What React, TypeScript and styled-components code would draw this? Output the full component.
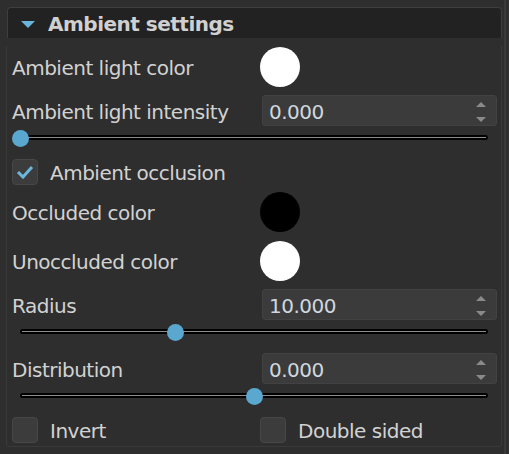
import React from 'react'
import styled, { createGlobalStyle } from 'styled-components'

const GlobalStyle = createGlobalStyle`
  html, body {
    margin: 0;
    padding: 0;
    background: #2e2e2e;
  }
  * {
    box-sizing: border-box;
  }
`

const Page = styled.div`
  width: 509px;
  height: 454px;
  display: flex;
  background: #2e2e2e;
  font-family: 'DejaVu Sans', 'Noto Sans', sans-serif;
  font-size: 20px;
  letter-spacing: -0.5px;
  color: #d2d2d2;
  overflow: hidden;
`

const Main = styled.div`
  flex: 1;
  padding: 7px 2px 0 6px;
`

const Rail = styled.div`
  width: 2px;
  margin-right: 3px;
  background: #3a3a3a;
`

const Header = styled.div`
  height: 31px;
  margin-left: 1px;
  display: flex;
  align-items: center;
  gap: 13px;
  padding: 2px 0 0 13px;
  background: #222222;
  border: 1px solid #3e3e3e;
  border-bottom: none;
  border-radius: 4px 4px 0 0;
`

const Caret = styled.svg`
  width: 14px;
  height: 7px;
  flex: none;
`

const Title = styled.span`
  font-weight: bold;
  color: #d0d0d0;
`

const Body = styled.div`
  margin-top: 8px;
  height: 401px;
  padding: 0 4px 0 5px;
  border: 1px solid #393939;
  border-top: none;
  border-radius: 0 0 3px 3px;
  display: flex;
  flex-direction: column;
`

const Row = styled.div<{ $mt: number; $h: number }>`
  margin-top: ${p => p.$mt}px;
  height: ${p => p.$h}px;
  display: grid;
  grid-template-columns: 248px 1fr;
  align-items: center;
`

const Label = styled.span`
  white-space: nowrap;
  padding-top: 2px;
`

const Swatch = styled.div<{ $color: string }>`
  width: 40px;
  height: 40px;
  border-radius: 50%;
  background: ${p => p.$color};
`

const Spin = styled.div`
  height: 31px;
  margin-left: 2px;
  display: flex;
  align-items: center;
  justify-content: space-between;
  padding: 2px 10px 0 6px;
  background: #3b3b3b;
  border: 1px solid #424242;
  border-radius: 3px;
  color: #d0d7df;
`

const Arrows = styled.div`
  display: flex;
  flex-direction: column;
  gap: 10px;
`

const Arrow = styled.svg`
  width: 10px;
  height: 5px;
  display: block;
`

const SliderBox = styled.div<{ $h: number }>`
  height: ${p => p.$h}px;
  padding: 0 9px 0 8px;
  display: flex;
  align-items: center;
`

const Track = styled.div`
  position: relative;
  flex: 1;
  height: 5px;
  background: #000;
  border-radius: 3px;

  &::after {
    content: '';
    position: absolute;
    left: 2px;
    right: 2px;
    top: 2px;
    height: 1px;
    background: #8c8c8c;
  }
`

const Thumb = styled.div`
  position: absolute;
  top: 50%;
  width: 17px;
  height: 17px;
  margin: -7px 0 0 -8.5px;
  border-radius: 50%;
  background: #5aa7cf;
  z-index: 1;
`

const CheckRow = styled.div<{ $mt: number }>`
  margin-top: ${p => p.$mt}px;
  height: 26px;
  display: grid;
  grid-template-columns: 248px 1fr;
  align-items: center;
`

const CheckItem = styled.label`
  display: flex;
  align-items: center;
  gap: 12px;
  white-space: nowrap;
`

const Box = styled.span`
  width: 26px;
  height: 26px;
  flex: none;
  display: flex;
  align-items: center;
  justify-content: center;
  background: #3c3c3c;
  border: 1px solid #474747;
  border-radius: 4px;
`

function Spinner({ value }: { value: string }) {
  return (
    <Spin>
      <span>{value}</span>
      <Arrows>
        <Arrow viewBox="0 0 10 5">
          <polygon points="0,5 10,5 5,0" fill="#8a8a8a" />
        </Arrow>
        <Arrow viewBox="0 0 10 5">
          <polygon points="0,0 10,0 5,5" fill="#8a8a8a" />
        </Arrow>
      </Arrows>
    </Spin>
  )
}

function Slider({ frac, h }: { frac: number; h: number }) {
  return (
    <SliderBox $h={h}>
      <Track>
        <Thumb style={{ left: `${frac * 100}%` }} />
      </Track>
    </SliderBox>
  )
}

function Check({ label, checked }: { label: string; checked?: boolean }) {
  return (
    <CheckItem>
      <Box>
        {checked && (
          <svg width="18" height="14" viewBox="0 0 18 14">
            <polyline
              points="2,7 7,12 16,2"
              fill="none"
              stroke="#6cb6dc"
              strokeWidth="3"
            />
          </svg>
        )}
      </Box>
      <Label>{label}</Label>
    </CheckItem>
  )
}

function App() {
  return (
    <Page>
      <GlobalStyle />
      <Main>
        <Header>
          <Caret viewBox="0 0 14 7">
            <polygon points="0,0 14,0 7,7" fill="#6ab4dc" />
          </Caret>
          <Title>Ambient settings</Title>
        </Header>
        <Body>
          <Row $mt={1} $h={40}>
            <Label>Ambient light color</Label>
            <Swatch $color="#ffffff" />
          </Row>
          <Row $mt={8} $h={31}>
            <Label>Ambient light intensity</Label>
            <Spinner value="0.000" />
          </Row>
          <Slider frac={0} h={22} />
          <CheckRow $mt={11}>
            <Check label="Ambient occlusion" checked />
          </CheckRow>
          <Row $mt={7} $h={40}>
            <Label>Occluded color</Label>
            <Swatch $color="#000000" />
          </Row>
          <Row $mt={9} $h={40}>
            <Label>Unoccluded color</Label>
            <Swatch $color="#ffffff" />
          </Row>
          <Row $mt={8} $h={31}>
            <Label>Radius</Label>
            <Spinner value="10.000" />
          </Row>
          <Slider frac={1 / 3} h={22} />
          <Row $mt={11} $h={31}>
            <Label>Distribution</Label>
            <Spinner value="0.000" />
          </Row>
          <Slider frac={0.5} h={22} />
          <CheckRow $mt={11}>
            <Check label="Invert" />
            <Check label="Double sided" />
          </CheckRow>
        </Body>
      </Main>
      <Rail />
    </Page>
  )
}

export default App
